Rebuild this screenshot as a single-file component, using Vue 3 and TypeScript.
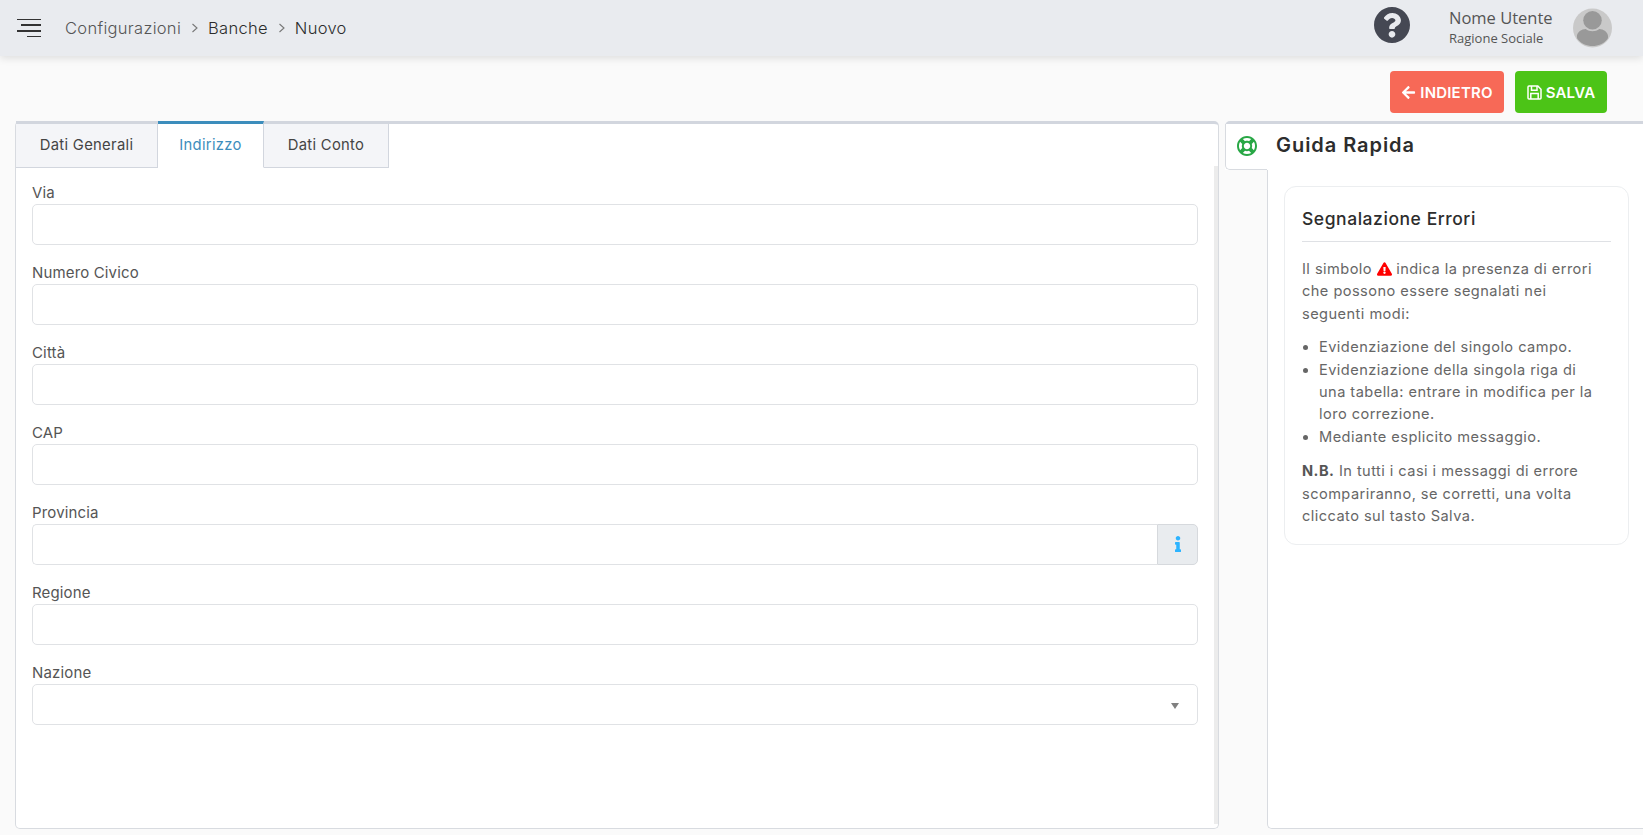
<script setup lang="ts">
interface Field { label: string; kind?: 'info' | 'select' }
const crumbs = ['Banche', 'Nuovo']
const tabs = ['Dati Generali', 'Indirizzo', 'Dati Conto']
const fields: Field[] = [
  { label: 'Via' },
  { label: 'Numero Civico' },
  { label: 'Città' },
  { label: 'CAP' },
  { label: 'Provincia', kind: 'info' },
  { label: 'Regione' },
  { label: 'Nazione', kind: 'select' }
]
</script>

<template>
  <div class="page">
    <header class="topbar">
      <div class="burger"><i class="l1"></i><i class="l2"></i><i class="l3"></i><i class="l4"></i></div>
      <nav class="crumbs">
        <span class="crumb-root">Configurazioni</span>
        <template v-for="c in crumbs" :key="c">
          <svg class="chev" viewBox="0 0 8 10"><path d="M1.5 1l4.500 4-4.500 4" fill="none" stroke="#777" stroke-width="1.100" /></svg>
          <span class="crumb">{{ c }}</span>
        </template>
      </nav>
      <div class="spacer"></div>
      <svg class="help" viewBox="8 8 496 496"><path fill="#454853" d="M504 256c0 136.997-111.043 248-248 248S8 392.997 8 256C8 119.083 119.043 8 256 8s248 111.083 248 248zM262.655 90c-54.497 0-89.255 22.957-116.549 63.758-3.536 5.286-2.353 12.415 2.715 16.258l34.699 26.31c5.205 3.947 12.621 3.008 16.665-2.122 17.864-22.658 30.113-35.797 57.303-35.797 20.429 0 45.698 13.148 45.698 32.958 0 14.976-12.363 22.667-32.534 33.976C247.128 238.528 216 254.941 216 296v4c0 6.627 5.373 12 12 12h56c6.627 0 12-5.373 12-12v-1.333c0-28.462 83.186-29.647 83.186-106.667 0-58.002-60.165-102-116.531-102zM256 338c-25.365 0-46 20.635-46 46 0 25.364 20.635 46 46 46s46-20.636 46-46c0-25.365-20.635-46-46-46z" /></svg>
      <div class="user">
        <div class="user-name">Nome Utente</div>
        <div class="user-org">Ragione Sociale</div>
      </div>
      <svg class="avatar" viewBox="0 0 40 40">
        <circle cx="20" cy="20" r="20" fill="#c9c9c9" />
        <circle cx="20" cy="12" r="9.500" fill="#999" />
        <path fill="#999" d="M4 29c0-5 5-8 9-8 2 1.600 4.500 2.300 7 2.300s5-.7 7-2.300c4 0 9 3 9 8 0 1-.2 1.500-.6 2.300C32 36 26 38.500 20 38.500S8 36 4.600 31.300C4.200 30.500 4 30 4 29z" />
      </svg>
    </header>

    <div class="actions">
      <button class="btn btn-back" type="button">
        <svg class="btn-ico" viewBox="0 0 448 512"><path fill="#fff" d="M257.500 445.100l-22.200 22.200c-9.400 9.400-24.600 9.400-33.900 0L7 273c-9.400-9.400-9.400-24.600 0-33.900L201.400 44.700c9.400-9.400 24.600-9.400 33.900 0l22.200 22.200c9.500 9.500 9.300 25-.4 34.300L136.600 216H424c13.300 0 24 10.700 24 24v32c0 13.300-10.700 24-24 24H136.600l120.500 114.800c9.800 9.300 10 24.800.4 34.300z" /></svg>
        INDIETRO
      </button>
      <button class="btn btn-save" type="button">
        <svg class="btn-ico" viewBox="0 0 15 15" fill="none" stroke="#fff" stroke-width="1.500">
          <path d="M2 1H10.800L14 4.200V13a1 1 0 0 1-1 1H2a1 1 0 0 1-1-1V2a1 1 0 0 1 1-1z" />
          <path d="M4.500 1V5.200H10V1" />
          <path d="M3.800 14V8.500H11.200V14" />
        </svg>
        SALVA
      </button>
    </div>

    <main class="content">
      <section class="form-card">
        <div class="tabs">
          <div v-for="t in tabs" :key="t" class="tab" :class="{ active: t === 'Indirizzo' }">{{ t }}</div>
        </div>
        <div class="scroll-strip"></div>
        <form class="form">
          <div v-for="f in fields" :key="f.label" class="field">
            <label class="label">{{ f.label }}</label>
            <div class="control" :class="{ 'has-addon': f.kind === 'info' }">
              <div class="input"></div>
              <div v-if="f.kind === 'info'" class="addon">
                <svg class="info-ico" viewBox="0 0 192 512"><path fill="#2db4ff" d="M20 424.229h20V279.771H20c-11.046 0-20-8.954-20-20V212c0-11.046 8.954-20 20-20h112c11.046 0 20 8.954 20 20v212.229h20c11.046 0 20 8.954 20 20V492c0 11.046-8.954 20-20 20H20c-11.046 0-20-8.954-20-20v-47.771c0-11.046 8.954-20 20-20zM96 0C56.235 0 24 32.235 24 72s32.235 72 72 72 72-32.235 72-72S135.764 0 96 0z" /></svg>
              </div>
              <span v-if="f.kind === 'select'" class="caret"></span>
            </div>
          </div>
        </form>
      </section>

      <aside class="guide">
        <div class="guide-head">
          <div class="guide-tab">
            <svg class="ring" viewBox="8 8 496 496"><path fill="#28a745" d="M256 504c136.967 0 248-111.033 248-248S392.967 8 256 8 8 119.033 8 256s111.033 248 248 248zm-103.398-76.720l53.411-53.411c31.806 13.506 68.128 13.522 99.974 0l53.411 53.411c-63.217 38.319-143.579 38.319-206.796 0zM336 256c0 44.112-35.888 80-80 80s-80-35.888-80-80 35.888-80 80-80 80 35.888 80 80zm91.280 103.398l-53.411-53.411c13.505-31.806 13.522-68.128 0-99.974l53.411-53.411c38.319 63.217 38.319 143.579 0 206.796zM359.397 84.720l-53.411 53.411c-31.806-13.505-68.128-13.522-99.973 0L152.602 84.720c63.217-38.319 143.579-38.319 206.795 0zM84.720 152.602l53.411 53.411c-13.506 31.806-13.522 68.128 0 99.974L84.720 359.398c-38.319-63.217-38.319-143.579 0-206.796z" /></svg>
          </div>
          <h2 class="guide-title">Guida Rapida</h2>
        </div>
        <div class="guide-body">
          <article class="note">
            <h3 class="note-title">Segnalazione Errori</h3>
            <p class="note-text">Il simbolo <svg class="warn" viewBox="0 0 576 512"><path fill="#f00" d="M569.517 440.013C587.975 472.007 564.806 512 527.940 512H48.054c-36.937 0-59.999-40.055-41.577-71.987L246.423 24.035c18.467-32.009 64.720-31.951 83.154 0l239.940 415.978zM288 354c-25.405 0-46 20.595-46 46s20.595 46 46 46 46-20.595 46-46-20.595-46-46-46zm-43.673-165.346l7.418 136c.347 6.364 5.609 11.346 11.982 11.346h48.546c6.373 0 11.635-4.982 11.982-11.346l7.418-136c.375-6.874-5.098-12.654-11.982-12.654h-63.383c-6.884 0-12.356 5.780-11.981 12.654z" /></svg> indica la presenza di errori<br />che possono essere segnalati nei<br />seguenti modi:</p>
            <ul class="note-list">
              <li>Evidenziazione del singolo campo.</li>
              <li>Evidenziazione della singola riga di<br />una tabella: entrare in modifica per la<br />loro correzione.</li>
              <li>Mediante esplicito messaggio.</li>
            </ul>
            <p class="note-text last"><b>N.B.</b> In tutti i casi i messaggi di errore<br />scompariranno, se corretti, una volta<br />cliccato sul tasto Salva.</p>
          </article>
        </div>
      </aside>
    </main>
  </div>
</template>

<style>
html, body { margin: 0; background: #fafafa; }
</style>

<style scoped>
.page {
  height: 835px;
  overflow: hidden;
  display: flex;
  flex-direction: column;
  background: #fafafa;
  font-family: Inter, "Noto Sans", sans-serif;
  color: #444;
}
.topbar {
  height: 56px;
  flex: none;
  display: flex;
  align-items: center;
  background: #e9ebef;
  box-shadow: 0 2px 8px rgba(0, 0, 0, .12);
  padding: 0 31px 0 17px;
  box-sizing: border-box;
  position: relative;
}
.burger { width: 24px; height: 19px; display: flex; flex-direction: column; justify-content: space-between; align-items: flex-end; }
.burger i { display: block; height: 1.500px; background: #333; }
.l1 { width: 24px; }
.l2 { width: 20px; }
.l3 { width: 24px; }
.l4 { width: 14px; }
.crumbs { display: flex; align-items: center; margin-left: 24px; font-size: 16.500px; letter-spacing: .3px; }
.crumb-root { color: #555; font-weight: 300; }
.crumb { color: #2b2b2b; font-weight: 300; }
.chev { width: 8px; height: 10px; margin: 0 9px 0 10px; }
.spacer { flex: 1; }
.help { width: 36px; height: 36px; margin-bottom: 6px; }
.user { margin-left: 39px; width: 124px; padding-bottom: 2px; font-family: "Open Sans", sans-serif; color: #555; }
.user-name { font-size: 16.500px; line-height: 22px; }
.user-org { font-size: 13px; line-height: 18px; }
.avatar { width: 39px; height: 40px; }

.actions {
  flex: none;
  display: flex;
  justify-content: flex-end;
  gap: 11px;
  padding: 15px 36px 0 0;
  height: 65px;
  box-sizing: border-box;
}
.btn {
  height: 42px;
  border: 0;
  border-radius: 4px;
  color: #fff;
  font: 600 15px Inter, sans-serif;
  letter-spacing: .2px;
  display: flex;
  align-items: center;
  justify-content: center;
  gap: 4px;
  padding: 0;
}
.btn-back { width: 114px; background: #f76957; }
.btn-save { width: 92px; background: #4cc417; }
.btn-ico { width: 15px; height: 15px; flex: none; }

.content {
  flex: 1;
  display: flex;
  padding: 0 0 6px 15px;
  min-height: 0;
}
.form-card {
  width: 1204px;
  flex: none;
  box-sizing: border-box;
  background: #fff;
  border: 1px solid #d8dbe0;
  border-top: 3px solid #d2d6de;
  border-radius: 5px;
  position: relative;
}
.scroll-strip {
  position: absolute;
  right: 0;
  top: 42px;
  bottom: 4px;
  width: 4px;
  background: #ececec;
}
.tabs { display: flex; height: 44px; margin-top: -3px; }
.tab {
  box-sizing: border-box;
  height: 47px;
  padding: 0 0 2px;
  width: 142px;
  background: #f4f5f8;
  border-top: 3px solid #d2d6de;
  border-right: 1px solid #d2d6de;
  border-bottom: 1px solid #d2d6de;
  color: #444;
  font-size: 14.800px;
  letter-spacing: .3px;
  display: flex;
  align-items: center;
  justify-content: center;
}
.tab:nth-child(2) { width: 106px; }
.tab:nth-child(3) { width: 125px; }
.tab.active {
  background: #fff;
  color: #3c8dbc;
  border-top-color: #3c8dbc;
  border-bottom-color: #fff;
}
.form { padding: 17.800px 20px 0 16px; }
.field { height: 80px; }
.label { display: block; font-size: 15px; letter-spacing: .15px; line-height: 20px; color: #555; font-weight: 400; }
.control {
  position: relative;
  height: 41.400px;
  display: flex;
  margin-top: 1px;
}
.input {
  flex: 1;
  box-sizing: border-box;
  background: #fff;
  border: 1px solid #e0e2e5;
  border-radius: 5px;
}
.has-addon .input { border-radius: 5px 0 0 5px; border-right: 0; }
.addon {
  width: 41px;
  box-sizing: border-box;
  background: #e9ecef;
  border: 1px solid #d6d9dd;
  border-radius: 0 5px 5px 0;
  display: flex;
  align-items: center;
  justify-content: center;
}
.info-ico { width: 8px; height: 16px; }
.caret {
  position: absolute;
  right: 19px;
  top: 19px;
  width: 0;
  height: 0;
  border: 4.500px solid transparent;
  border-top: 6px solid #808080;
  border-bottom: 0;
}

.guide {
  flex: 1;
  margin-left: 6px;
  display: flex;
  flex-direction: column;
  min-width: 0;
}
.guide-head {
  height: 49px;
  flex: none;
  display: flex;
  border-top: 3px solid #d2d6de;
  border-top-left-radius: 5px;
  box-sizing: border-box;
  background: #fff;
}
.guide-tab {
  width: 42px;
  box-sizing: border-box;
  background: #fff;
  border-left: 1px solid #d8dbe0;
  border-bottom: 1px solid #d8dbe0;
  border-bottom-left-radius: 5px;
  display: flex;
  align-items: center;
  justify-content: center;
  padding: 0 0 1px 0;
}
.ring { width: 20px; height: 20px; }
.guide-title {
  margin: 0 0 0 9px;
  height: 46px;
  font-size: 20px;
  font-weight: 600;
  line-height: 43px;
  color: #2d2d2d;
  letter-spacing: .95px;
}
.guide-body {
  flex: 1;
  margin-left: 42px;
  background: #fff;
  border-left: 1px solid #d8dbe0;
  border-bottom: 1px solid #d8dbe0;
  border-bottom-left-radius: 5px;
  padding: 16px 14px 0 16px;
}
.note {
  height: 359px;
  box-sizing: border-box;
  border: 1px solid #eceef0;
  border-radius: 12px;
  padding: 17px 17px 0 17px;
  background: #fff;
}
.note-title {
  margin: 0;
  height: 38px;
  box-sizing: border-box;
  border-bottom: 1px solid #dfe1e5;
  font-size: 17.500px;
  line-height: 29px;
  letter-spacing: .55px;
  font-weight: 500;
  color: #2d2d2d;
}
.note-text {
  margin: 16px 0 0;
  font-size: 14.600px;
  letter-spacing: .45px;
  line-height: 22.400px;
  color: #666;
}
.note-text.last { margin-top: 12px; }
.note-text b { font-weight: 700; color: #555; }
.warn { width: 15px; height: 14px; vertical-align: -1.500px; }
.note-list {
  margin: 11px 0 0;
  padding: 0 0 0 17px;
  font-size: 14.600px;
  letter-spacing: .45px;
  line-height: 22.400px;
  color: #666;
}
</style>
